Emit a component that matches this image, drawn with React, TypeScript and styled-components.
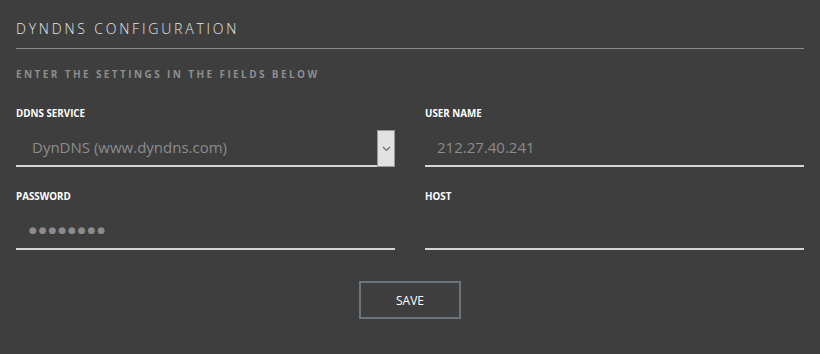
import React from 'react'
import styled, { createGlobalStyle } from 'styled-components'

const GlobalStyle = createGlobalStyle`
  html, body {
    margin: 0;
    padding: 0;
    background: #3e3e3e;
  }
  body {
    font-family: 'Open Sans', 'Noto Sans', sans-serif;
  }
`

const Page = styled.div`
  width: 820px;
  height: 354px;
  box-sizing: border-box;
  padding: 18px 16px 0 16px;
  background: #3e3e3e;
`

const Title = styled.h1`
  margin: 0;
  padding-bottom: 9px;
  border-bottom: 1px solid #8a8a8a;
  font-size: 14px;
  font-weight: 300;
  letter-spacing: 2.8px;
  line-height: 21px;
  color: #e6e6e6;
`

const Subtitle = styled.h2`
  margin: 17px 0 0 0;
  font-size: 10px;
  font-weight: 700;
  letter-spacing: 2.4px;
  line-height: 16px;
  color: #8e8e8e;
`

const Grid = styled.div`
  display: grid;
  grid-template-columns: 379px 379px;
  column-gap: 30px;
  row-gap: 24px;
  margin-top: 26px;
`

const Field = styled.div`
  display: flex;
  flex-direction: column;
`

const Label = styled.label`
  font-size: 9.8px;
  font-weight: 700;
  line-height: 12px;
  color: #ffffff;
`

const SelectWrap = styled.div`
  display: flex;
  align-items: stretch;
  margin-top: 10px;
  height: 37px;
`

const SelectValue = styled.div`
  flex: 1;
  display: flex;
  align-items: center;
  padding: 0 0 2px 16px;
  border-bottom: 2px solid #d6d6d6;
  font-size: 15px;
  color: #8c8c8c;
`

const SelectButton = styled.div`
  width: 16px;
  display: flex;
  align-items: center;
  justify-content: center;
  background: #e2e2e2;
  border: 1px solid #9a9a9a;
`

const Input = styled.div<{ $dots?: boolean }>`
  margin-top: 10px;
  height: 37px;
  box-sizing: border-box;
  display: flex;
  align-items: center;
  padding: 0 12px 2px ${({ $dots }) => ($dots ? '13px' : '12px')};
  border-bottom: 2px solid #d6d6d6;
  font-family: ${({ $dots }) => ($dots ? "'DejaVu Sans', sans-serif" : 'inherit')};
  font-size: ${({ $dots }) => ($dots ? '9px' : '15px')};
  letter-spacing: ${({ $dots }) => ($dots ? '1.9px' : '0')};
  color: #8c8c8c;
`

const Actions = styled.div`
  display: flex;
  justify-content: center;
  margin-top: 31px;
`

const SaveButton = styled.button`
  width: 102px;
  height: 38px;
  background: transparent;
  border: 2px solid #6b737b;
  color: #ffffff;
  font-family: 'Open Sans', sans-serif;
  font-size: 12px;
  cursor: pointer;
`

const Chevron = () => (
  <svg width="9" height="6" viewBox="0 0 9 6">
    <path d="M1 1 L4.5 4.5 L8 1" fill="none" stroke="#6a6a6a" strokeWidth="1.2" />
  </svg>
)

const App = () => (
  <Page>
    <GlobalStyle />
    <Title>DYNDNS CONFIGURATION</Title>
    <Subtitle>ENTER THE SETTINGS IN THE FIELDS BELOW</Subtitle>
    <Grid>
      <Field>
        <Label>DDNS SERVICE</Label>
        <SelectWrap>
          <SelectValue>DynDNS (www.dyndns.com)</SelectValue>
          <SelectButton>
            <Chevron />
          </SelectButton>
        </SelectWrap>
      </Field>
      <Field>
        <Label>USER NAME</Label>
        <Input>212.27.40.241</Input>
      </Field>
      <Field>
        <Label>PASSWORD</Label>
        <Input $dots>●●●●●●●●</Input>
      </Field>
      <Field>
        <Label>HOST</Label>
        <Input />
      </Field>
    </Grid>
    <Actions>
      <SaveButton>SAVE</SaveButton>
    </Actions>
  </Page>
)

export default App
